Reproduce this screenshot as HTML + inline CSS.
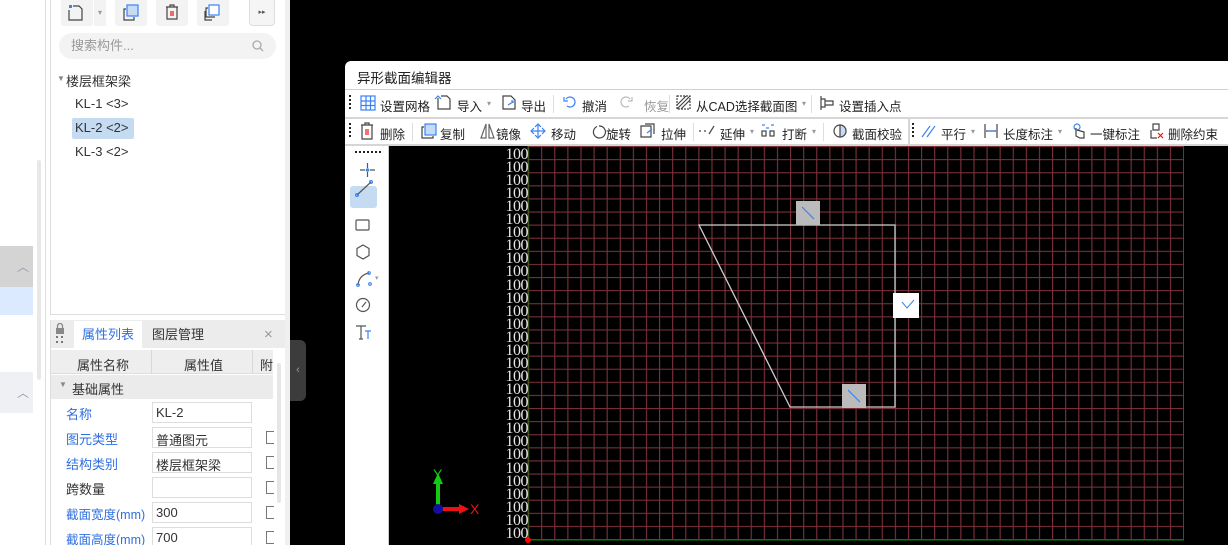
<!DOCTYPE html>
<html><head><meta charset="utf-8"><style>
*{box-sizing:border-box;margin:0;padding:0}
html,body{width:1228px;height:545px;overflow:hidden}
body{background:#000;font-family:"Liberation Sans","Noto Sans CJK SC",sans-serif;font-size:13px;color:#333;position:relative}
.abs{position:absolute}
.tb span{position:absolute;top:0;white-space:nowrap}
</style></head><body>
<div class="abs" style="left:0;top:0;width:290px;height:545px;background:#fff"></div>
<div class="abs" style="left:0;top:246px;width:33px;height:41px;background:#d4d4d4"></div>
<div class="abs" style="left:0;top:287px;width:33px;height:28px;background:#dbeafe"></div>
<div class="abs" style="left:0;top:372px;width:33px;height:41px;background:#eef0f4"></div>
<div class="abs" style="left:17px;top:258px;color:#99a;font-size:12px">︿</div>
<div class="abs" style="left:17px;top:384px;color:#99a;font-size:12px">︿</div>
<div class="abs" style="left:37px;top:160px;width:4px;height:220px;background:#e8e8e8;border-radius:2px"></div>
<div class="abs" style="left:45px;top:0;width:1px;height:545px;background:#ddd"></div>
<div class="abs" style="left:50px;top:0;width:236px;height:315px;border:1px solid #ddd;border-top:none;background:#fff"></div>
<div class="abs" style="left:61px;top:0;width:32px;height:26px;background:#f3f3f3;border-radius:0 0 3px 3px"></div>
<div class="abs" style="left:94px;top:0;width:12px;height:26px;background:#f3f3f3;color:#999;font-size:8px;text-align:center;line-height:26px">▾</div>
<svg class="abs" style="left:68px;top:4px" width="18" height="18"><rect x="1" y="1" width="3" height="3" fill="#3b82f6"/><path d="M1 6 V16 H14 V5 L11 2 H5" fill="none" stroke="#444" stroke-width="1.2"/></svg>
<div class="abs" style="left:115px;top:0;width:32px;height:26px;background:#f3f3f3;border-radius:0 0 3px 3px"></div>
<svg class="abs" style="left:122px;top:4px" width="18" height="18"><rect x="5" y="1" width="11" height="11" fill="#c6dcf5" stroke="#3b82f6" stroke-width="1.2"/><path d="M4 5 H2 V16 H12 V13" fill="none" stroke="#444" stroke-width="1.2"/></svg>
<div class="abs" style="left:156px;top:0;width:32px;height:26px;background:#f3f3f3;border-radius:0 0 3px 3px"></div>
<svg class="abs" style="left:163px;top:3px" width="18" height="18"><path d="M3 4 H15 M7 4 V2 H11 V4 M4 4 V16 H14 V4" fill="none" stroke="#444" stroke-width="1.2"/><path d="M8 8 V13 M10 8 V13" stroke="#e11" stroke-width="1.2"/></svg>
<div class="abs" style="left:197px;top:0;width:32px;height:26px;background:#f3f3f3;border-radius:0 0 3px 3px"></div>
<svg class="abs" style="left:203px;top:4px" width="18" height="18"><rect x="6" y="1" width="10" height="10" fill="#fff" stroke="#3b82f6" stroke-width="1.2"/><path d="M5 4 H3 V13 H12 M2 7 V16 H9" fill="none" stroke="#444" stroke-width="1.2"/></svg>
<div class="abs" style="left:249px;top:0;width:26px;height:26px;background:#f5f5f5;border:1px solid #ddd;border-top:none;border-radius:0 0 4px 4px;font-size:7px;text-align:center;line-height:26px;color:#555">▸▸</div>
<div class="abs" style="left:59px;top:33px;width:217px;height:26px;background:#f3f3f3;border-radius:13px;color:#999;line-height:26px;padding-left:12px">搜索构件...</div>
<svg class="abs" style="left:252px;top:40px" width="12" height="12"><circle cx="5" cy="5" r="4" fill="none" stroke="#aaa" stroke-width="1.3"/><path d="M8 8 L11 11" stroke="#aaa" stroke-width="1.3"/></svg>
<div class="abs" style="left:57px;top:74px;color:#888;font-size:8px">▼</div>
<div class="abs" style="left:66px;top:71px;color:#333">楼层框架梁</div>
<div class="abs" style="left:75px;top:96px;color:#333">KL-1 &lt;3&gt;</div>
<div class="abs" style="left:72px;top:118px;width:62px;height:21px;background:#c5dbf2;border-radius:2px"></div>
<div class="abs" style="left:75px;top:120px;color:#333">KL-2 &lt;2&gt;</div>
<div class="abs" style="left:75px;top:144px;color:#333">KL-3 &lt;2&gt;</div>
<div class="abs" style="left:50px;top:320px;width:236px;height:225px;background:#fff;border-left:1px solid #ddd"></div>
<div class="abs" style="left:51px;top:320px;width:234px;height:28px;background:#ececec"></div>
<svg class="abs" style="left:55px;top:323px" width="12" height="22"><rect x="1" y="5" width="8" height="6" fill="#888"/><path d="M2.5 5 V3 A2.5 2.5 0 0 1 7.5 3 V5" fill="none" stroke="#888" stroke-width="1.3"/><g fill="#777"><rect x="1" y="13" width="2" height="2"/><rect x="6" y="13" width="2" height="2"/><rect x="1" y="18" width="2" height="2"/><rect x="6" y="18" width="2" height="2"/></g></svg>
<div class="abs" style="left:74px;top:321px;width:68px;height:27px;background:#fff;color:#2f6fe0;line-height:27px;text-align:center">属性列表</div>
<div class="abs" style="left:152px;top:321px;line-height:27px">图层管理</div>
<div class="abs" style="left:264px;top:321px;line-height:27px;color:#999;font-size:15px">×</div>
<div class="abs" style="left:51px;top:350px;width:222px;height:24px;background:#eee;border-bottom:1px solid #ddd"></div>
<div class="abs" style="left:151px;top:350px;width:1px;height:24px;background:#d8d8d8"></div>
<div class="abs" style="left:252px;top:350px;width:1px;height:24px;background:#d8d8d8"></div>
<div class="abs" style="left:77px;top:355px">属性名称</div>
<div class="abs" style="left:184px;top:355px">属性值</div>
<div class="abs" style="left:260px;top:355px">附</div>
<div class="abs" style="left:51px;top:375px;width:222px;height:24px;background:#ebebeb"></div>
<div class="abs" style="left:59px;top:380px;color:#888;font-size:8px">▼</div>
<div class="abs" style="left:72px;top:379px">基础属性</div>
<div class="abs" style="left:277px;top:363px;width:4px;height:140px;background:#e6e6e6;border-radius:2px"></div>
<div class="abs" style="left:66px;top:404px;color:#2f6fe0">名称</div>
<div class="abs" style="left:66px;top:429px;color:#2f6fe0">图元类型</div>
<div class="abs" style="left:66px;top:454px;color:#2f6fe0">结构类别</div>
<div class="abs" style="left:66px;top:479px">跨数量</div>
<div class="abs" style="left:66px;top:504px;color:#2f6fe0;font-size:12.5px">截面宽度(mm)</div>
<div class="abs" style="left:66px;top:529px;color:#2f6fe0;font-size:12.5px">截面高度(mm)</div>
<div class="abs" style="left:152px;top:402px;width:100px;height:21px;border:1px solid #ddd;padding:2px 3px">KL-2</div>
<div class="abs" style="left:152px;top:427px;width:100px;height:21px;border:1px solid #ddd;padding:2px 3px">普通图元</div>
<div class="abs" style="left:152px;top:452px;width:100px;height:21px;border:1px solid #ddd;padding:2px 3px">楼层框架梁</div>
<div class="abs" style="left:152px;top:477px;width:100px;height:21px;border:1px solid #ddd;padding:2px 3px"></div>
<div class="abs" style="left:152px;top:502px;width:100px;height:21px;border:1px solid #ddd;padding:2px 3px">300</div>
<div class="abs" style="left:152px;top:527px;width:100px;height:18px;border:1px solid #ddd;border-bottom:none;padding:2px 3px">700</div>
<div class="abs" style="left:266px;top:431px;width:8px;height:13px;border:1px solid #777;border-right:none"></div>
<div class="abs" style="left:266px;top:456px;width:8px;height:13px;border:1px solid #777;border-right:none"></div>
<div class="abs" style="left:266px;top:481px;width:8px;height:13px;border:1px solid #777;border-right:none"></div>
<div class="abs" style="left:266px;top:506px;width:8px;height:13px;border:1px solid #777;border-right:none"></div>
<div class="abs" style="left:266px;top:531px;width:8px;height:13px;border:1px solid #777;border-right:none"></div>
<div class="abs" style="left:285px;top:0;width:5px;height:545px;background:#f0f0f0"></div>
<div class="abs" style="left:290px;top:340px;width:16px;height:61px;background:#3c3c3c;border-radius:0 6px 6px 0;color:#999;font-size:11px;line-height:61px;text-align:center">‹</div>
<div class="abs" style="left:345px;top:61px;width:883px;height:484px;background:#fff;border-radius:6px 0 0 0"></div>
<div class="abs" style="left:357px;top:67px;font-size:13.5px;color:#222">异形截面编辑器</div>
<div class="abs" style="left:345px;top:89px;width:883px;height:1px;background:#d0d0d0"></div>
<div class="abs" style="left:345px;top:117px;width:883px;height:2px;background:#d6d6d6"></div>
<div class="abs" style="left:345px;top:144px;width:883px;height:2px;background:#d6d6d6"></div>
<div class="abs" style="left:349px;top:95px;width:2px;height:16px;background:repeating-linear-gradient(#222 0 2px,transparent 2px 4px)"></div>
<div class="abs" style="left:349px;top:123px;width:2px;height:16px;background:repeating-linear-gradient(#222 0 2px,transparent 2px 4px)"></div>
<div class="abs" style="left:912px;top:123px;width:2px;height:16px;background:repeating-linear-gradient(#222 0 2px,transparent 2px 4px)"></div>
<div class="abs" style="left:908px;top:119px;width:2px;height:25px;background:#d6d6d6"></div>
<div class="abs" style="left:553px;top:95px;width:1px;height:18px;background:#ddd"></div>
<div class="abs" style="left:669px;top:95px;width:1px;height:18px;background:#ddd"></div>
<div class="abs" style="left:811px;top:95px;width:1px;height:18px;background:#ddd"></div>
<div class="abs" style="left:412px;top:123px;width:1px;height:18px;background:#ddd"></div>
<div class="abs" style="left:693px;top:123px;width:1px;height:18px;background:#ddd"></div>
<div class="abs" style="left:823px;top:123px;width:1px;height:18px;background:#ddd"></div>
<svg class="abs" style="left:345px;top:90px" width="883" height="27" fill="none" stroke-width="1.2">
<g stroke="#3b82f6"><rect x="16" y="6" width="14" height="14"/><path d="M21 6V20M25.5 6V20M16 11H30M16 15.5H30"/></g>
<path d="M93 8V19H105V9L102 6H96" stroke="#444"/><path d="M90 9 L93 6 L96 9" stroke="#3b82f6"/>
<path d="M158 6H166L170 10V19H158Z" stroke="#444"/><path d="M163 15 L168 12 M166 11h2v2" stroke="#3b82f6"/>
<path d="M221 9 A5 5 0 1 1 222 16 M219 7V11H223" stroke="#3b82f6"/>
<path d="M285 9 A5 5 0 1 0 284 16 M287 7V11H283" stroke="#bbb"/>
<rect x="332" y="6" width="13" height="13" stroke="#444" stroke-dasharray="2 1"/><path d="M332 19L345 6M336 19L345 10M332 15L341 6" stroke="#444"/>
<path d="M476 6V20M476 9H480V17H476M480 11H488V15H480" stroke="#444"/>
</svg>
<div class="abs tb" style="left:345px;top:96px;width:883px;height:18px;font-size:12.5px;color:#222">
<span style="left:35px">设置网格</span><span style="left:112px">导入</span><span style="left:142px;color:#999;font-size:8px;top:3px">▾</span><span style="left:176px">导出</span><span style="left:237px">撤消</span><span style="left:299px;color:#999">恢复</span><span style="left:351px">从CAD选择截面图</span><span style="left:457px;color:#999;font-size:8px;top:3px">▾</span><span style="left:494px">设置插入点</span></div>
<svg class="abs" style="left:345px;top:118px" width="883" height="27" fill="none" stroke-width="1.2">
<path d="M16 7H28M20 7V5H24V7M17 7V21H27V7" stroke="#444"/><path d="M21 11V17M23 11V17" stroke="#e11"/>
<rect x="80" y="6" width="11" height="11" fill="#c6dcf5" stroke="#3b82f6"/><path d="M79 9H77V20H88V18" stroke="#444"/>
<path d="M136 20 L141 6 L141 20Z M144 20L144 6L149 20Z" stroke="#666"/>
<path d="M193 6V20M186 13H200M190 9L193 6L196 9M190 17L193 20L196 17M189 10L186 13L189 16M197 10L200 13L197 16" stroke="#3b82f6"/>
<path d="M252 8.5 A6 6 0 1 0 254 8" stroke="#444"/>
<path d="M296 8H306V19H296Z M300 6H309V16" stroke="#444"/><path d="M302 15L307 11" stroke="#3b82f6"/>
<path d="M354 13H356M359 13H361M364 16L369 8" stroke="#444"/>
<rect x="417" y="13" width="4" height="5" stroke="#444"/><rect x="425" y="13" width="4" height="5" stroke="#444"/><path d="M417 7h3M426 7h3M421 10h3" stroke="#3b82f6"/>
<circle cx="495" cy="13" r="6" stroke="#444"/><path d="M495 7 A6 6 0 0 1 495 19Z" fill="#c6dcf5" stroke="#444"/>
<path d="M577 19L585 8M582 19L590 8" stroke="#3b82f6"/>
<path d="M640 6V20M652 6V20M641 13H651" stroke="#444"/><path d="M642 13H650" stroke="#3b82f6"/>
<circle cx="732" cy="9" r="3" stroke="#3b82f6"/><path d="M731 10V18L735 20H739V14L732 12" stroke="#444"/>
<path d="M808 6H814V12H808Z M806 12V20H812" stroke="#444"/><path d="M813 15L818 20M818 15L813 20" stroke="#e11"/>
</svg>
<div class="abs tb" style="left:345px;top:124px;width:883px;height:18px;font-size:12.5px;color:#222">
<span style="left:35px">删除</span><span style="left:95px">复制</span><span style="left:151px">镜像</span><span style="left:206px">移动</span><span style="left:261px">旋转</span><span style="left:316px">拉伸</span><span style="left:375px">延伸</span><span style="left:405px;color:#999;font-size:8px;top:3px">▾</span><span style="left:437px">打断</span><span style="left:467px;color:#999;font-size:8px;top:3px">▾</span><span style="left:507px">截面校验</span><span style="left:596px">平行</span><span style="left:626px;color:#999;font-size:8px;top:3px">▾</span><span style="left:658px">长度标注</span><span style="left:713px;color:#999;font-size:8px;top:3px">▾</span><span style="left:745px">一键标注</span><span style="left:823px">删除约束</span></div>
<div class="abs" style="left:355px;top:151px;width:26px;height:2px;background:repeating-linear-gradient(90deg,#222 0 2px,transparent 2px 4px)"></div>
<div class="abs" style="left:350px;top:186px;width:27px;height:22px;background:#c5dbf2;border-radius:3px"></div>
<svg class="abs" style="left:345px;top:155px" width="44" height="190" fill="none" stroke-width="1.2">
<path d="M15 15H20M25 15H30M22.5 8V13M22.5 17V22" stroke="#555"/><circle cx="22.5" cy="15" r="1.8" fill="#3b82f6"/>
<path d="M12 40L26 27" stroke="#555"/><circle cx="12" cy="40" r="1.4" stroke="#3b82f6"/><circle cx="26" cy="27" r="1.4" stroke="#3b82f6"/>
<rect x="11" y="65" width="13" height="10" rx="1" stroke="#555"/>
<path d="M18 90L24 93.5V100.5L18 104L12 100.5V93.5Z" stroke="#555"/>
<path d="M13 130 Q14 120 24 118" stroke="#555"/><circle cx="13" cy="130" r="1.3" stroke="#3b82f6"/><circle cx="24" cy="118" r="1.3" stroke="#3b82f6"/><circle cx="25" cy="129" r="1.3" stroke="#3b82f6"/>
<circle cx="18" cy="150" r="6.5" stroke="#555"/><path d="M17 152L21 147" stroke="#555"/>
<path d="M11 171H21M16 171V184M14 184H18" stroke="#555"/><path d="M20 176H26M23 176V184" stroke="#3b82f6"/>
</svg>
<div class="abs" style="left:375px;top:274px;color:#999;font-size:7px">▾</div>
<div class="abs" style="left:388px;top:146px;width:1px;height:399px;background:#ccc"></div>
<svg class="abs" style="left:389px;top:146px" width="839" height="399">
<defs>
<pattern id="g" x="139" y="0" width="13.1" height="13.1" patternUnits="userSpaceOnUse"><path d="M0.5 0V13.1M0 0.5H13.1" stroke="#7a3038" stroke-width="1.3" fill="none"/></pattern>
</defs>
<rect width="839" height="399" fill="#000"/>
<rect x="139" y="0" width="656" height="394" fill="url(#g)"/>
<path d="M139 0V394M139 394H795" stroke="#0a7a0a" stroke-width="1"/>
<g font-family="Liberation Serif" font-size="16" fill="#e8e8e8" text-anchor="end" letter-spacing="-0.5">
<text x="139" y="13">100</text><text x="139" y="26">100</text><text x="139" y="39">100</text><text x="139" y="52">100</text><text x="139" y="65">100</text><text x="139" y="78">100</text><text x="139" y="91">100</text><text x="139" y="104">100</text><text x="139" y="117">100</text><text x="139" y="130">100</text><text x="139" y="144">100</text><text x="139" y="157">100</text><text x="139" y="170">100</text><text x="139" y="183">100</text><text x="139" y="196">100</text><text x="139" y="209">100</text><text x="139" y="222">100</text><text x="139" y="235">100</text><text x="139" y="248">100</text><text x="139" y="261">100</text><text x="139" y="274">100</text><text x="139" y="287">100</text><text x="139" y="300">100</text><text x="139" y="313">100</text><text x="139" y="327">100</text><text x="139" y="340">100</text><text x="139" y="353">100</text><text x="139" y="366">100</text><text x="139" y="379">100</text><text x="139" y="392">100</text>
</g>
<circle cx="139" cy="394" r="3" fill="#f00"/>
<path d="M310 79H506V261H401Z" fill="none" stroke="#ccc" stroke-width="1.3"/>
<rect x="407" y="55" width="24" height="24" fill="#bbb"/><path d="M413 61L425 73" stroke="#3b82f6" stroke-width="1.2"/>
<rect x="504" y="147" width="26" height="25" fill="#fff"/><path d="M513 156L518 162L525 154" stroke="#3b82f6" fill="none"/>
<rect x="453" y="238" width="24" height="24" fill="#bbb"/><path d="M459 244L471 256" stroke="#3b82f6" stroke-width="1.2"/>
<path d="M49 363V333" stroke="#1c1" stroke-width="4"/><path d="M44 338L49 327L54 338Z" fill="#1c1"/>
<path d="M49 363H74" stroke="#e11" stroke-width="4"/><path d="M70 358L80 363L70 368Z" fill="#e11"/>
<circle cx="49" cy="363" r="5" fill="#1010a0"/>
<text x="44" y="333" font-family="Liberation Sans" font-size="14" fill="#1c1">Y</text>
<text x="81" y="368" font-family="Liberation Sans" font-size="14" fill="#e11">X</text>
</svg>
</body></html>
